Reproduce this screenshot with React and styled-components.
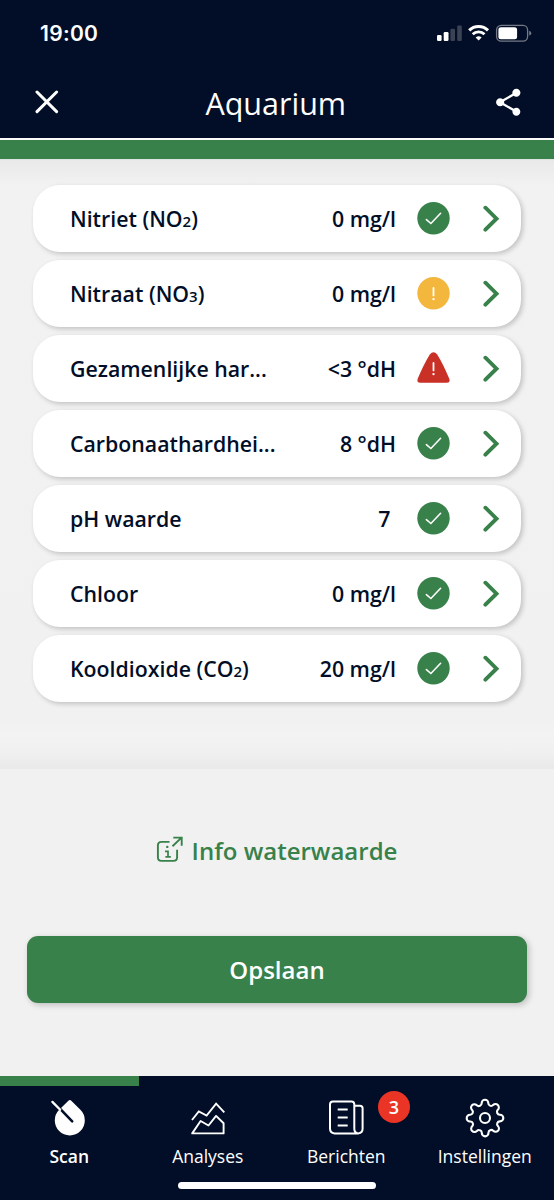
import React from "react";
import styled, { createGlobalStyle } from "styled-components";
import { MdShare } from "react-icons/md";
import { FiSettings } from "react-icons/fi";

const GlobalStyle = createGlobalStyle`
  * {
    box-sizing: border-box;
  }

  body {
    margin: 0;
    background: #f1f1f1;
    font-family: "Open Sans", "Noto Sans", sans-serif;
  }

  button {
    border: 0;
    padding: 0;
    background: none;
    font-family: inherit;
  }

  svg {
    display: block;
    flex-shrink: 0;
  }
`;

const results = [
  { name: "Nitriet (NO", sub: "2", value: "0 mg/l", status: "ok" },
  { name: "Nitraat (NO", sub: "3", value: "0 mg/l", status: "warning" },
  { name: "Gezamenlijke har...", value: "<3 °dH", status: "danger" },
  { name: "Carbonaathardhei...", value: "8 °dH", status: "ok" },
  { name: "pH waarde", value: "7\u00a0", status: "ok" },
  { name: "Chloor", value: "0 mg/l", status: "ok" },
  { name: "Kooldioxide (CO", sub: "2", value: "20 mg/l", status: "ok" },
];

const StatusIcon = ({ status }) => {
  if (status === "ok") {
    return (
      <svg width="33" height="33" viewBox="0 0 33 33" fill="none">
        <circle cx="16.5" cy="16.3" r="16.2" fill="#38814a" />
        <path d="M9.4 17.6 L13.9 21.5 L23.6 11.3" stroke="#fff" strokeWidth="1.6" strokeLinecap="round" />
      </svg>
    );
  }
  return (
    <svg width="33" height="33" viewBox="0 0 33 33" fill="none">
      {status === "warning" ? (
        <circle cx="16.5" cy="16.3" r="16.2" fill="#f3b73e" />
      ) : (
        <path
          d="M12.8 2.4 Q16.5 -1.8 20.2 2.4 Q26.5 12.6 32.2 26.6 Q33.6 30.8 29.8 30.8 H3.2 Q-0.6 30.8 0.8 26.6 Q6.5 12.6 12.8 2.4Z"
          fill="#c93026"
        />
      )}
      <path d="M16.5 11 V18.4" stroke="#fff" strokeWidth="1.8" strokeLinecap="round" />
      <circle cx="16.5" cy="22.1" r="1.2" fill="#fff" />
    </svg>
  );
};

const StatusBar = () => (
  <StatusRow>
    <Time>19:00</Time>
    <svg width="96" height="20" viewBox="0 0 96 20" fill="none">
      <rect x="1" y="11" width="4.6" height="6" rx="1.2" fill="#fff" />
      <rect x="7.7" y="8" width="4.8" height="9" rx="1.2" fill="#fff" />
      <rect x="14.4" y="4.8" width="4.6" height="12.2" rx="1.2" fill="#3b4254" />
      <rect x="21.2" y="1.5" width="4.6" height="15.5" rx="1.2" fill="#3b4254" />
      <path d="M33.2 6.4 A13.2 13.2 0 0 1 52 6.4" stroke="#fff" strokeWidth="3" />
      <path d="M36.7 10.3 A8.2 8.2 0 0 1 48.5 10.3" stroke="#fff" strokeWidth="2.8" />
      <path d="M39.6 13.5 Q42.6 11.2 45.6 13.5 L42.6 16.6Z" fill="#fff" />
      <rect x="60.6" y="1.3" width="31" height="15.8" rx="4.6" stroke="#747986" strokeWidth="1.3" />
      <rect x="62.4" y="3.2" width="18.7" height="12" rx="2.5" fill="#fff" />
      <path d="M93.2 6.8 Q95.3 7.4 95.3 9.2 Q95.3 11 93.2 11.6Z" fill="#747986" />
    </svg>
  </StatusRow>
);

const ScanIcon = () => (
  <svg width="40" height="40" viewBox="0 0 40 40" fill="none">
    <path
      d="M22.3 2.7 L31.4 11.8 A15 15 0 1 1 10.2 11.8 L19.4 2.7 Q20.8 1.5 22.3 2.7Z"
      fill="#fff"
    />
    <path d="M10 9.6 L23.2 23.4" stroke="#020e27" strokeWidth="2.6" strokeLinecap="round" />
    <path d="M3.4 3.9 L11.2 11.8" stroke="#fff" strokeWidth="2.3" strokeLinecap="round" />
  </svg>
);

const AnalysesIcon = () => (
  <svg width="40" height="40" viewBox="0 0 40 40" fill="none" stroke="#fff" strokeWidth="1.9">
    <path d="M4 22 L10.8 13.5 L18.6 17.6 L28.1 5.6 L36.3 14.4" />
    <path d="M4.2 35.4 L12.6 23 L20.5 27.5 L28.1 17.9 L35.6 25.2 V35.4Z" strokeLinejoin="round" />
  </svg>
);

const BerichtenIcon = () => (
  <svg width="40" height="40" viewBox="0 0 40 40" fill="none" stroke="#fff" strokeWidth="2">
    <path d="M31.8 35.4 H8.5 Q4 35 4 30.5 V6.6 Q4 3.6 7 3.6 H25.5 Q28.3 3.6 28.3 6.6 V30.6 Q28.3 35.4 32.2 35.4 Q36.6 35 36.6 30.8 V10.3 Q36.6 7.7 34 7.7 H28.3" />
    <path d="M11.7 11.5 H21.7 M11.7 19.5 H21.7 M11.7 27.5 H21.7" />
  </svg>
);

const App = () => {
  return (
    <Screen>
      <GlobalStyle />
      <StatusBar />
      <Header>
        <button aria-label="Sluiten">
          <svg width="24" height="24" viewBox="0 0 24 24" fill="none">
            <path d="M2 2 L21.6 21.6 M21.6 2 L2 21.6" stroke="#fff" strokeWidth="3" strokeLinecap="round" />
          </svg>
        </button>
        <Title>Aquarium</Title>
        <button aria-label="Delen">
          <MdShare size={32.5} color="#fff" />
        </button>
      </Header>
      <Strip />

      <ResultList>
        {results.map(({ name, sub, value, status }) => (
          <Result key={name}>
            <ResultName>
              {name}
              {sub && (
                <>
                  <Subscript>{sub}</Subscript>)
                </>
              )}
            </ResultName>
            <ResultValue>{value}</ResultValue>
            <StatusIcon status={status} />
            <svg width="17" height="28" viewBox="0 0 17 28" fill="none">
              <path d="M2.4 2.7 L13.5 13.7 L2.4 24.7" stroke="#38814a" strokeWidth="3.9" strokeLinecap="round" />
            </svg>
          </Result>
        ))}
      </ResultList>

      <Actions>
        <InfoLink>
          <svg width="28" height="28" viewBox="0 0 28 28" fill="none" stroke="#38814a" strokeWidth="1.9">
            <path d="M13.5 5.9 H5.5 Q1.9 5.9 1.9 9.5 V21.3 Q1.9 24.9 5.5 24.9 H17.5 Q21.1 24.9 21.1 21.3 V13.7" />
            <path d="M16.5 10.2 L25.5 1.6 M17.3 1.6 H25.7 V9.8" />
            <path d="M9 15.4 H12 V20.7 M9.4 20.9 H14.8" strokeWidth="1.7" />
            <circle cx="11.3" cy="10.9" r="1.2" fill="#38814a" stroke="none" />
          </svg>
          Info waterwaarde
        </InfoLink>
        <SaveButton>Opslaan</SaveButton>
      </Actions>

      <TabBar>
        <Tab $active>
          <ScanIcon />
          <TabLabel $active>Scan</TabLabel>
        </Tab>
        <Tab>
          <AnalysesIcon />
          <TabLabel>Analyses</TabLabel>
        </Tab>
        <Tab>
          <BerichtenIcon />
          <Badge>3</Badge>
          <TabLabel>Berichten</TabLabel>
        </Tab>
        <Tab>
          <FiSettings size={40} color="#fff" strokeWidth={1.25} />
          <TabLabel>Instellingen</TabLabel>
        </Tab>
      </TabBar>
      <HomeArea>
        <HomeIndicator />
      </HomeArea>
    </Screen>
  );
};

const Screen = styled.div`
  display: flex;
  flex-direction: column;
  width: 554px;
  height: 1200px;
  overflow: hidden;
  background: #f1f1f1;
  color: #020e27;
`;

const StatusRow = styled.div`
  display: flex;
  justify-content: space-between;
  height: 66px;
  padding: 24px 22px 0 40px;
  background: #020e27;
`;

const Time = styled.span`
  color: #fff;
  font-family: Inter, sans-serif;
  font-size: 21px;
  font-weight: 600;
  line-height: 20px;
  letter-spacing: 0.3px;
`;

const Header = styled.header`
  display: flex;
  align-items: center;
  justify-content: space-between;
  height: 72px;
  padding: 0 30px 0 35px;
  background: #020e27;
`;

const Title = styled.h1`
  margin: 2px 0 0 1px;
  color: #fff;
  font-size: 30.5px;
  font-weight: 400;
  line-height: 40px;
`;

const Strip = styled.div`
  height: 22px;
  background: #38814a;
  border-top: 2px solid #fbfbfb;
  border-bottom: 1px solid #dde3df;
`;

const ResultList = styled.main`
  display: flex;
  flex-direction: column;
  gap: 8px;
  height: 609px;
  padding: 25px 33px 0;
  background: linear-gradient(#e9e9e9, #f2f2f2 26px, #f1f1f1 560px, #f3f3f3 576px, #f0f0f0 592px, #e9e9e9);
`;

const Result = styled.div`
  display: flex;
  align-items: center;
  height: 67px;
  padding: 0 21px 0 37px;
  background: #fff;
  border-radius: 27px;
  box-shadow: 2px 2px 5px rgba(0, 0, 0, 0.2);

  svg:last-child {
    margin-left: 33px;
  }
`;

const ResultName = styled.span`
  flex: 1;
  padding-bottom: 1px;
  font-size: 21.3px;
  font-weight: 600;
  white-space: nowrap;
`;

const Subscript = styled.span`
  font-size: 15px;
`;

const ResultValue = styled.span`
  margin-right: 21px;
  padding-bottom: 1px;
  font-size: 21.3px;
  font-weight: 600;
  white-space: nowrap;
`;

const Actions = styled.section`
  display: flex;
  flex-direction: column;
  align-items: center;
  height: 307px;
  padding: 65px 27px 0;
`;

const InfoLink = styled.button`
  display: flex;
  align-items: center;
  gap: 8px;
  height: 32px;
  margin-right: 1px;
  color: #38814a;
  font-size: 24px;
  font-weight: 600;
  white-space: nowrap;
`;

const SaveButton = styled.button`
  width: 100%;
  height: 67px;
  margin-top: 70px;
  border-radius: 11px;
  background: #38814a;
  box-shadow: 2px 2px 6px rgba(0, 0, 0, 0.22);
  color: #fff;
  font-size: 24px;
  font-weight: 600;
`;

const TabBar = styled.nav`
  display: grid;
  grid-template-columns: repeat(4, 1fr);
  height: 100px;
  background: #020e27;
`;

const Tab = styled.div`
  position: relative;
  display: flex;
  flex-direction: column;
  align-items: center;
  gap: 5px;
  padding-top: 12px;
  border-top: 10px solid ${({ $active }) => ($active ? "#38814a" : "transparent")};
`;

const TabLabel = styled.span`
  color: #fff;
  font-size: 17.5px;
  font-weight: ${({ $active }) => ($active ? 600 : 400)};
  line-height: 26px;
`;

const Badge = styled.span`
  position: absolute;
  top: 5px;
  left: 101px;
  width: 32px;
  height: 32px;
  border-radius: 50%;
  background: #ea3526;
  color: #fff;
  font-size: 18px;
  font-weight: 600;
  line-height: 32px;
  text-align: center;
`;

const HomeArea = styled.div`
  display: flex;
  justify-content: center;
  height: 24px;
  padding-top: 6px;
  background: #020e27;
`;

const HomeIndicator = styled.div`
  width: 198px;
  height: 7px;
  border-radius: 4px;
  background: #fff;
`;

export default App;
